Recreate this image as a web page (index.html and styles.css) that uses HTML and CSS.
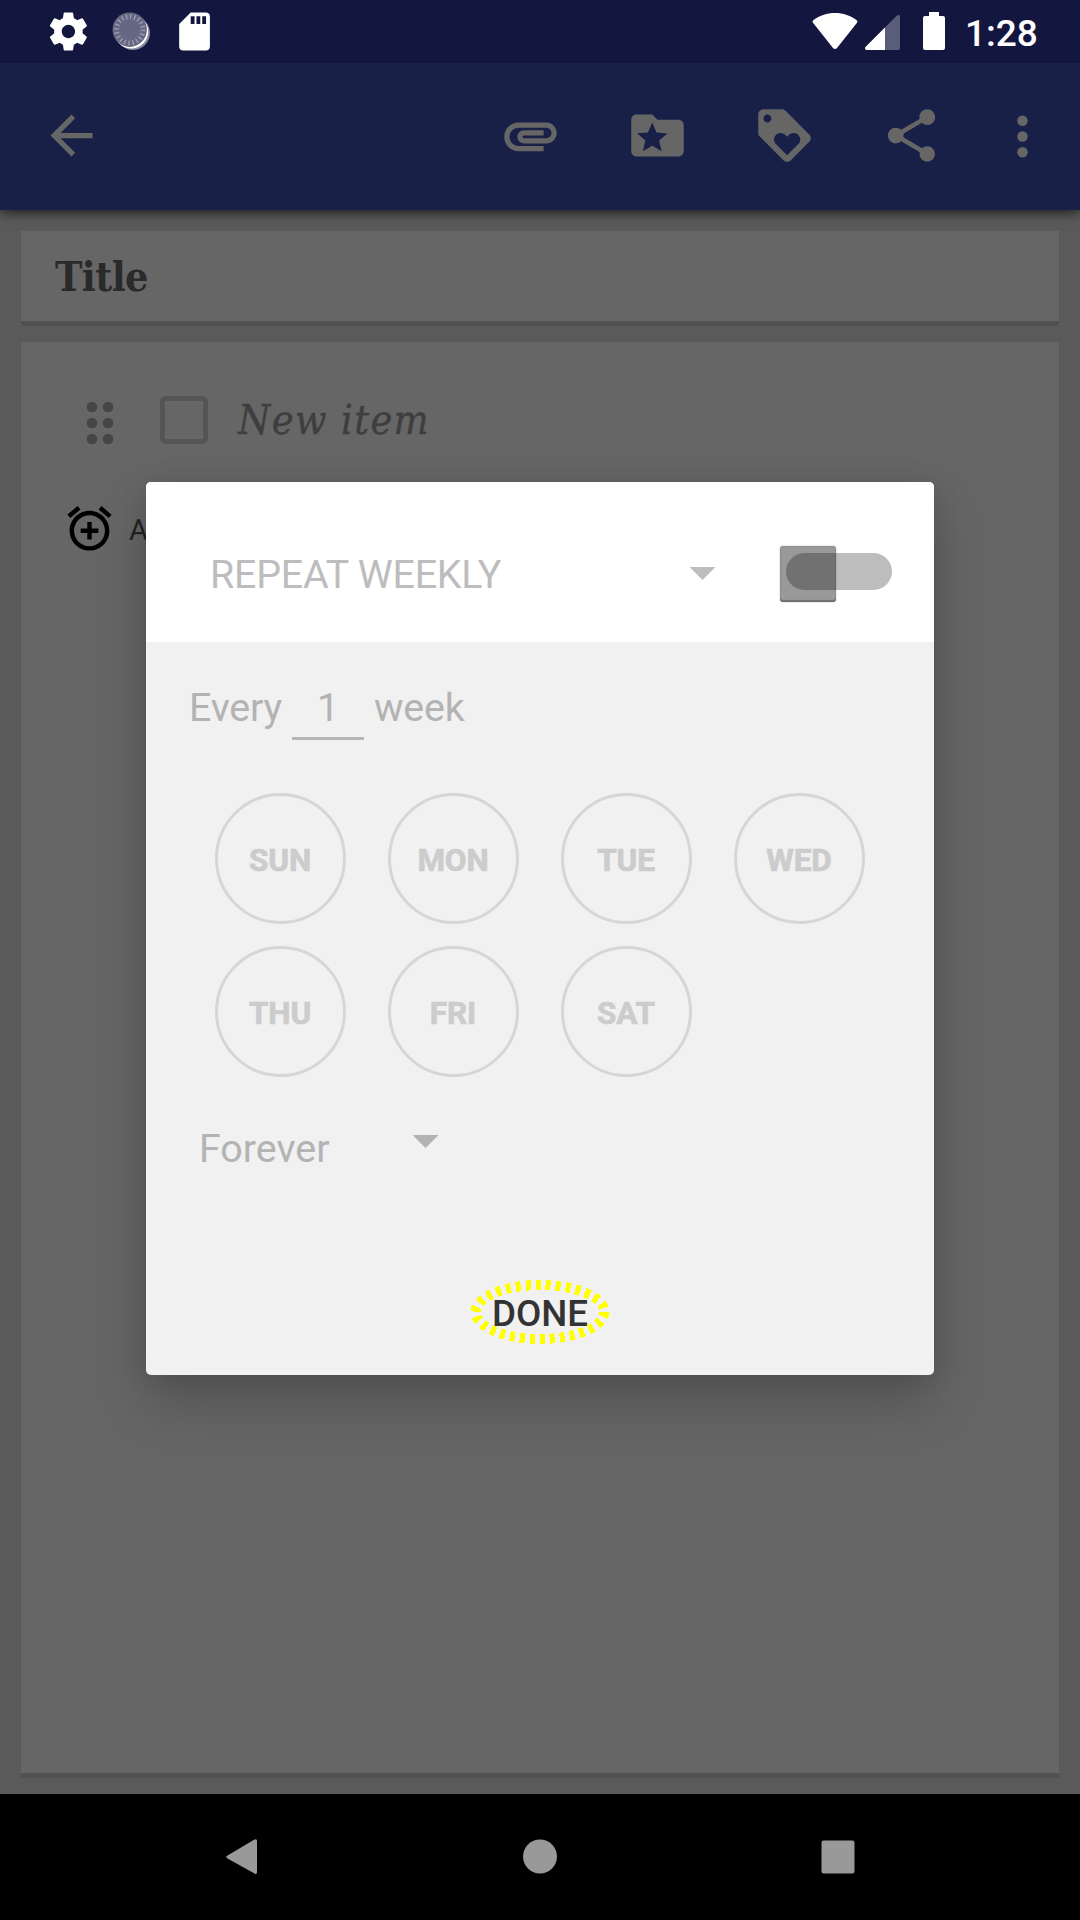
FILE: index.html
```html
<!DOCTYPE html>
<html lang="en">
<head>
<meta charset="utf-8">
<title>Note reminder</title>
<link rel="stylesheet" href="styles.css">
</head>
<body>
<div class="screen">
  <header class="status-bar">
    <svg class="status-left" width="240" height="63" viewBox="0 0 240 63">
      <g transform="translate(45.6 8.7) scale(1.9)" fill="#fff"><path d="M19.43 12.98c.04-.32.07-.64.07-.98s-.03-.66-.07-.98l2.11-1.65c.19-.15.24-.42.12-.64l-2-3.46c-.12-.22-.39-.3-.61-.22l-2.49 1c-.52-.4-1.08-.73-1.69-.98l-.38-2.65C14.46 2.18 14.25 2 14 2h-4c-.25 0-.46.18-.49.42l-.38 2.65c-.61.25-1.17.59-1.69.98l-2.49-1c-.23-.09-.49 0-.61.22l-2 3.46c-.13.22-.07.49.12.64l2.11 1.65c-.04.32-.07.65-.07.98s.03.66.07.98l-2.11 1.65c-.19.15-.24.42-.12.64l2 3.46c.12.22.39.3.61.22l2.49-1c.52.4 1.08.73 1.69.98l.38 2.65c.03.24.24.42.49.42h4c.25 0 .46-.18.49-.42l.38-2.65c.61-.25 1.17-.59 1.69-.98l2.49 1c.23.09.49 0 .61-.22l2-3.46c.12-.22.07-.49-.12-.64l-2.11-1.65zM12 15.5c-1.93 0-3.5-1.57-3.5-3.5s1.57-3.5 3.5-3.5 3.5 1.57 3.5 3.5-1.57 3.5-3.5 3.5z"/></g>
      <circle cx="133" cy="33" r="17" fill="#8688a0"/>
      <circle cx="131.200" cy="31.500" r="17" fill="#fff"/>
      <circle cx="129.700" cy="29.700" r="17.200" fill="#666883"/>
      <circle cx="129.700" cy="29.700" r="13.200" fill="none" stroke="#a0a1b2" stroke-width="5" stroke-dasharray="1.200 2.947"/>
      <g transform="translate(171.5 8.7) scale(1.92 1.9)" fill="#fff"><path d="M18 2h-8L4 8v12c0 1.1.9 2 2 2h12c1.100 0 2-.9 2-2V4c0-1.100-.9-2-2-2zm-6 6h-2V4h2v4zm3 0h-2V4h2v4zm3 0h-2V4h2v4z"/></g>
    </svg>
    <div class="status-right">
      <svg width="140" height="63" viewBox="0 0 140 63">
        <path d="M3 20.500C15 10.500 35 10.500 47 20.500q1 1 0 2.200L27 48q-2 2-4 0L3 22.700q-1-1.200 0-2.200z" fill="#fff"/>
        <path d="M56.500 50q-2.500-1-1-3L87 15.500q3-1.500 3 1.500v31q0 2-2 2z" fill="#fff" fill-opacity=".3"/>
        <path d="M56.500 50q-2.500-1-1-3L75 27.500V50z" fill="#fff"/>
        <path d="M119 12h10v4h4q2 0 2 2v30q0 2-2 2h-18q-2 0-2-2V18q0-2 2-2h4z" fill="#fff"/>
      </svg>
      <span class="clock">1:28</span>
    </div>
  </header>

  <nav class="toolbar">
    <svg class="icon" viewBox="0 0 24 24"><path d="M20 11H7.830l5.590-5.590L12 4l-8 8 8 8 1.410-1.410L7.830 13H20v-2z"/></svg>
    <div class="actions">
      <svg class="icon" viewBox="0 0 24 24"><path d="M2 12.500C2 9.460 4.460 7 7.500 7H18c2.210 0 4 1.790 4 4s-1.790 4-4 4H9.500C8.120 15 7 13.880 7 12.500S8.120 10 9.500 10H17v2H9.410c-.55 0-.55 1 0 1H18c1.100 0 2-.9 2-2s-.9-2-2-2H7.500C5.570 9 4 10.570 4 12.500S5.570 16 7.500 16H17v2H7.500C4.460 18 2 15.540 2 12.500z"/></svg>
      <svg class="icon" viewBox="0 0 24 24"><path d="M20 6h-8l-2-2H4c-1.100 0-2 .9-2 2v12c0 1.100.9 2 2 2h16c1.100 0 2-.9 2-2V8c0-1.100-.9-2-2-2zm-6.420 12L10 15.900 6.420 18l.95-4.070-3.160-2.740 4.160-.36L10 7l1.630 3.840 4.160.36-3.160 2.740.95 4.060z"/></svg>
      <svg class="icon" viewBox="0 0 24 24"><path d="M21.410 11.580l-9-9C12.050 2.220 11.550 2 11 2H4c-1.100 0-2 .9-2 2v7c0 .55.22 1.050.59 1.420l9 9c.36.36.86.58 1.410.58s1.050-.22 1.410-.59l7-7c.37-.36.59-.86.59-1.410s-.23-1.060-.59-1.420zM5.500 7C4.670 7 4 6.330 4 5.500S4.670 4 5.500 4 7 4.670 7 5.500 6.330 7 5.500 7zm11.770 8.270L13 19.540l-4.270-4.270C8.280 14.810 8 14.190 8 13.500c0-1.380 1.120-2.500 2.500-2.500.69 0 1.320.28 1.770.74l.73.72.73-.73c.45-.45 1.080-.73 1.770-.73 1.380 0 2.500 1.120 2.500 2.500 0 .69-.28 1.320-.73 1.770z"/></svg>
      <svg class="icon" viewBox="0 0 24 24"><path d="M18 16.080c-.76 0-1.440.3-1.960.77L8.910 12.700c.05-.23.09-.46.09-.7s-.04-.47-.09-.7l7.050-4.110c.54.5 1.250.81 2.040.81 1.660 0 3-1.340 3-3s-1.340-3-3-3-3 1.340-3 3c0 .24.04.47.09.7L8.040 9.810C7.500 9.310 6.790 9 6 9c-1.660 0-3 1.340-3 3s1.340 3 3 3c.79 0 1.500-.31 2.040-.81l7.120 4.160c-.05.21-.08.43-.08.65 0 1.610 1.310 2.920 2.920 2.920s2.920-1.310 2.920-2.920-1.310-2.920-2.920-2.920z"/></svg>
      <svg class="icon icon-more" viewBox="0 0 24 24"><circle cx="12" cy="6" r="2"/><circle cx="12" cy="12" r="2"/><circle cx="12" cy="18" r="2"/></svg>
    </div>
  </nav>

  <main class="note">
    <section class="card title-card"><h1 class="title">Title</h1></section>
    <section class="card body-card">
      <div class="item">
        <svg class="grip" width="28" height="44" viewBox="0 0 28 44"><circle cx="6" cy="6" r="5.300"/><circle cx="22" cy="6" r="5.300"/><circle cx="6" cy="22" r="5.300"/><circle cx="22" cy="22" r="5.300"/><circle cx="6" cy="38" r="5.300"/><circle cx="22" cy="38" r="5.300"/></svg>
        <span class="checkbox"></span>
        <span class="item-hint">New item</span>
      </div>
      <div class="reminder">
        <svg width="53" height="53" viewBox="0 0 24 24"><path d="M7.880 3.390L6.600 1.860 2 5.710l1.290 1.530 4.590-3.850zM22 5.720l-4.600-3.860-1.290 1.530 4.600 3.860L22 5.720zM12 4c-4.970 0-9 4.030-9 9s4.020 9 9 9c4.970 0 9-4.030 9-9s-4.030-9-9-9zm0 16c-3.870 0-7-3.130-7-7s3.130-7 7-7 7 3.130 7 7-3.130 7-7 7zm1-11h-2v3H8v2h3v3h2v-3h3v-2h-3V9z"/></svg>
        <span class="reminder-label">A</span>
      </div>
    </section>
  </main>

  <footer class="nav-bar">
    <svg width="36" height="40" viewBox="0 0 36 40"><path d="M2.500 18.500L29.500 2.500Q32 1.500 32 4v31q0 3-2.500 1.500L2.500 21.500q-2.500-1.500 0-3z"/></svg>
    <svg width="36" height="40" viewBox="0 0 36 40"><circle cx="17" cy="19.500" r="17"/></svg>
    <svg width="36" height="40" viewBox="0 0 36 40"><rect x="1.500" y="3.500" width="33" height="33" rx="2"/></svg>
  </footer>

  <div class="dialog">
    <div class="dialog-head">
      <span class="freq">REPEAT WEEKLY</span>
      <span class="caret"></span>
      <span class="switch"><span class="track"></span><span class="thumb"></span></span>
    </div>
    <div class="dialog-body">
      <div class="every"><span>Every</span><span class="count">1</span><span>week</span></div>
      <div class="days">
        <span class="day">SUN</span><span class="day">MON</span><span class="day">TUE</span><span class="day">WED</span>
        <span class="day">THU</span><span class="day">FRI</span><span class="day">SAT</span>
      </div>
      <div class="until"><span>Forever</span><span class="caret"></span></div>
      <div class="done">
        <span>DONE</span>
        <svg class="ring" width="140" height="66" viewBox="0 0 140 66"><ellipse cx="70" cy="33" rx="64.500" ry="27" shape-rendering="crispEdges"/></svg>
      </div>
    </div>
  </div>
</div>
</body>
</html>
```
FILE: styles.css
```css
* { box-sizing: border-box; }
body { margin: 0; font-family: Roboto, sans-serif; }
svg { display: block; flex: none; }
.screen { position: relative; display: flex; flex-direction: column; width: 1080px; height: 1920px; overflow: hidden; background: #5a5a5a; }

.status-bar { display: flex; justify-content: space-between; height: 63px; background: #13173f; }
.status-right { display: flex; width: 270px; }
.clock { margin-left: 15px; color: #fff; font-size: 37px; font-weight: 500; line-height: 68px; }

.toolbar { position: relative; display: flex; justify-content: space-between; height: 147px; padding: 41px 26px 0 40px; background: #192047; box-shadow: 0 2px 12px rgba(0,0,0,.75); clip-path: inset(0 0 -20px 0); }
.icon { width: 63px; height: 63px; fill: #666; }
.actions { display: flex; gap: 64px; }
.icon-more { margin: 1px 0 0 -16px; }

.note { display: flex; flex: 1; flex-direction: column; gap: 16px; padding: 21px 21px 16px; }
.card { background: #666; border-bottom: 5px solid #515151; }
.title-card { height: 95px; padding-left: 34px; }
.title { margin: 0; color: #2a2a2a; font: bold 41px/92px "DejaVu Serif Condensed", "DejaVu Serif", serif; font-stretch: condensed; letter-spacing: -.600px; }
.body-card { flex: 1; padding-top: 54px; }
.item { display: flex; align-items: center; height: 48px; padding-left: 65px; }
.grip { margin-top: 5px; fill: #454545; }
.checkbox { width: 48px; height: 48px; margin-left: 46px; border: 5px solid #555; border-radius: 5px; }
.item-hint { margin-left: 30px; color: #3e3e3e; font: italic 41px/46px "DejaVu Serif Condensed", "DejaVu Serif", serif; font-stretch: condensed; letter-spacing: 1.400px; white-space: nowrap; -webkit-text-stroke: .4px #3e3e3e; }
.reminder { display: flex; margin-top: 58px; padding-left: 42px; }
.reminder-label { margin-left: 13px; color: #222; font-size: 29px; line-height: 56px; }

.nav-bar { display: flex; align-items: center; justify-content: space-between; height: 126px; padding: 0 224px 0 225px; background: #000; fill: #999; }

.dialog { position: absolute; left: 146px; top: 482px; width: 788px; height: 893px; border-radius: 5px; overflow: hidden; background: #f1f1f1; box-shadow: 0 28px 56px rgba(0,0,0,.2), 0 2px 26px rgba(0,0,0,.1); }
.dialog-head { display: flex; align-items: center; height: 160px; padding: 0 42px 0 64px; background: #fff; color: #bdbdbd; font-size: 39.400px; }
.freq { flex: 1; padding-top: 26px; line-height: 46px; letter-spacing: -.25px; white-space: nowrap; }
.caret { width: 26px; height: 13px; background: currentColor; clip-path: polygon(0 0, 100% 0, 50% 100%); }
.dialog-head .caret { margin: 23px 63.500px 0 0; }
.switch { position: relative; width: 113px; height: 57px; margin-top: 23px; }
.track { position: absolute; left: 7px; top: 8px; width: 106px; height: 37px; border-radius: 18.500px; background: #bdbdbd; }
.thumb { position: absolute; left: .5px; top: .5px; width: 56px; height: 56px; border-radius: 3px; background: rgba(0,0,0,.4); box-shadow: inset 0 -2px 1px rgba(0,0,0,.25), inset 0 0 2px rgba(0,0,0,.2), 0 0 2px rgba(0,0,0,.25); }

.dialog-body { color: #b3b3b3; font-size: 39.400px; line-height: 46px; }
.every { display: flex; height: 151px; padding: 43px 0 0 43px; letter-spacing: -.2px; }
.count { width: 72px; height: 55px; margin: 0 10px; border-bottom: 3px solid #b5b5b5; text-align: center; }
.days { display: grid; grid-template-columns: repeat(4, 131px); gap: 22px 42px; padding-left: 69px; }
.day { height: 131px; border: 3px solid #d6d6d6; border-radius: 50%; color: #ccc; font-size: 31.500px; font-weight: 700; line-height: 129px; letter-spacing: -.1px; text-align: center; text-indent: -1px; -webkit-text-stroke: .7px #ccc; }
.until { display: flex; padding: 49px 0 0 53px; }
.until .caret { margin: 9px 0 0 83px; }
.done { position: relative; display: flex; justify-content: center; margin-top: 119px; color: #333; font-size: 36.750px; font-weight: 500; }
.ring { position: absolute; left: 324px; top: -12px; }
.ring ellipse { fill: none; stroke: #ff0; stroke-width: 10; stroke-dasharray: 5 5; }
```
